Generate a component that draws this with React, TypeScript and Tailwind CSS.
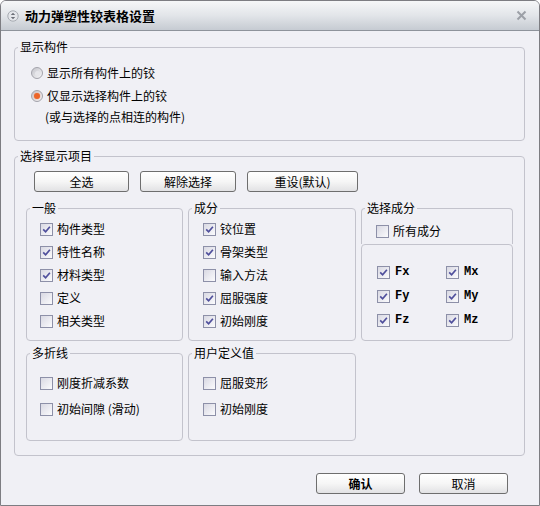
import React from "react";

type CheckProps = { label: string; on?: boolean; mono?: boolean };

const CheckBox = ({ on }: { on?: boolean }) => (
  <span className="flex h-[13px] w-[13px] shrink-0 items-center justify-center border border-[#8d90a8] bg-linear-to-br from-[#d9d9e3] to-[#fbfbfd]">
    {on && (
      <svg width="9" height="9" viewBox="0 0 9 9">
        <path d="M1.2 4.4 L3.6 6.8 L7.9 1.8" stroke="#4f4f9c" strokeWidth="1.7" fill="none" />
      </svg>
    )}
  </span>
);

const CheckRow = ({ label, on, mono }: CheckProps) => (
  <label className="flex h-[16px] items-center gap-[4px] leading-[16px]">
    <CheckBox on={on} />
    {mono ? (
      <span className="pl-[1px] font-['Liberation_Mono',monospace] text-[12px] font-bold">{label}</span>
    ) : (
      <span>{label}</span>
    )}
  </label>
);

const Radio = ({ label, on }: { label: string; on?: boolean }) => (
  <label className="flex h-[16px] items-center gap-[4px] leading-[16px]">
    <span className="flex h-[12px] w-[12px] items-center justify-center rounded-full border border-[#a3a3ab] bg-linear-to-br from-[#c4c4ca] to-[#f7f7f9]">
      {on ? (
        <span className="h-[6px] w-[6px] rounded-full bg-[#ec6428] shadow-[0_0_2px_#f5a07a]" />
      ) : (
        <span className="h-[5px] w-[5px] rounded-full bg-[#e6e6ea]" />
      )}
    </span>
    <span>{label}</span>
  </label>
);

const Button = ({ label, bold, width }: { label: string; bold?: boolean; width: string }) => (
  <button
    className={
      width +
      " h-[21px] rounded-[3px] border border-[#6e6e6e] bg-linear-to-b from-white via-[#f6f6f6] to-[#e2e2e4] text-[12px] leading-[19px] text-black " +
      (bold ? "font-bold" : "")
    }
  >
    {label}
  </button>
);

const Legend = ({ title }: { title: string }) => (
  <legend className="ml-[3px] px-[2px] text-[12px] leading-[16px]">{title}</legend>
);

export default function App() {
  return (
    <div className="flex h-[506px] w-[540px] flex-col overflow-hidden rounded-t-[6px] border border-[#7d7d82] bg-[#f0f0f5] font-['SimSun','Noto_Sans_CJK_SC',sans-serif] text-[12px] text-black">
      {/* title bar */}
      <div className="flex h-[30px] shrink-0 items-center border-b border-[#8e939b] bg-linear-to-b from-[#f6f7f8] via-[#e2e5e9] to-[#c6cbd2] pl-[6px] pr-[12px]">
        <svg width="12" height="12" viewBox="0 0 12 12">
          <circle cx="6" cy="6" r="5.2" fill="#e4e6ea" stroke="#a7abb2" />
          <path d="M3.8 5 L6 2.8 L8.2 5 Z M3.8 7 L6 9.2 L8.2 7 Z" fill="#6c7078" />
        </svg>
        <span className="ml-[6px] text-[13px] font-bold">动力弹塑性铰表格设置</span>
        <svg className="ml-auto" width="11" height="11" viewBox="0 0 11 11">
          <path d="M1.5 1.5 L9.5 9.5 M9.5 1.5 L1.5 9.5" stroke="#9ca0a7" strokeWidth="2" />
        </svg>
      </div>

      {/* body */}
      <div className="flex flex-1 flex-col pl-[13px] pr-[14px]">
        <fieldset className="mt-[8px] rounded-[4px] border border-[#c3c3cc]">
          <Legend title="显示构件" />
          <div className="flex flex-col pb-[15px] pl-[16px] pt-[10px]">
            <Radio label="显示所有构件上的铰" />
            <div className="mt-[7px]">
              <Radio label="仅显示选择构件上的铰" on />
            </div>
            <div className="ml-[14px] mt-[5px] leading-[16px]">(或与选择的点相连的构件)</div>
          </div>
        </fieldset>

        <fieldset className="mt-[7px] rounded-[4px] border border-[#c3c3cc]">
          <Legend title="选择显示项目" />
          <div className="flex flex-col pb-[14px] pl-[11px] pt-[7px]">
            <div className="ml-[8px] flex gap-[11px]">
              <Button label="全选" width="w-[95px]" />
              <Button label="解除选择" width="w-[96px]" />
              <Button label="重设(默认)" width="w-[111px]" />
            </div>

            <div className="mt-[8px] flex gap-[5px]">
              <fieldset className="w-[157px] rounded-[4px] border border-[#c3c3cc]">
                <Legend title="一般" />
                <div className="flex flex-col gap-[7px] pb-[11px] pl-[13px] pt-[5px]">
                  <CheckRow label="构件类型" on />
                  <CheckRow label="特性名称" on />
                  <CheckRow label="材料类型" on />
                  <CheckRow label="定义" />
                  <CheckRow label="相关类型" />
                </div>
              </fieldset>

              <fieldset className="w-[168px] rounded-[4px] border border-[#c3c3cc]">
                <Legend title="成分" />
                <div className="flex flex-col gap-[7px] pb-[11px] pl-[14px] pt-[5px]">
                  <CheckRow label="铰位置" on />
                  <CheckRow label="骨架类型" on />
                  <CheckRow label="输入方法" />
                  <CheckRow label="屈服强度" on />
                  <CheckRow label="初始刚度" on />
                </div>
              </fieldset>

              <div className="flex w-[152px] flex-col">
                <fieldset className="rounded-t-[4px] border border-b-0 border-[#c3c3cc]">
                  <Legend title="选择成分" />
                  <div className="pb-[5px] pl-[14px] pt-[7px]">
                    <CheckRow label="所有成分" />
                  </div>
                </fieldset>
                <div className="flex-1 rounded-[4px] border border-[#c3c3cc] pl-[15px] pt-[19px]">
                  <div className="grid grid-cols-[69px_1fr] gap-y-[8px]">
                    <CheckRow label="Fx" on mono />
                    <CheckRow label="Mx" on mono />
                    <CheckRow label="Fy" on mono />
                    <CheckRow label="My" on mono />
                    <CheckRow label="Fz" on mono />
                    <CheckRow label="Mz" on mono />
                  </div>
                </div>
              </div>
            </div>

            <div className="mt-[4px] flex gap-[5px]">
              <fieldset className="w-[157px] rounded-[4px] border border-[#c3c3cc]">
                <Legend title="多折线" />
                <div className="flex flex-col gap-[10px] pb-[23px] pl-[13px] pt-[14px]">
                  <CheckRow label="刚度折减系数" />
                  <CheckRow label="初始间隙 (滑动)" />
                </div>
              </fieldset>
              <fieldset className="w-[168px] rounded-[4px] border border-[#c3c3cc]">
                <Legend title="用户定义值" />
                <div className="flex flex-col gap-[10px] pb-[23px] pl-[14px] pt-[14px]">
                  <CheckRow label="屈服变形" />
                  <CheckRow label="初始刚度" />
                </div>
              </fieldset>
            </div>
          </div>
        </fieldset>

        <div className="mr-[17px] mt-[17px] flex justify-end gap-[14px]">
          <Button label="确认" bold width="w-[89px]" />
          <Button label="取消" width="w-[89px]" />
        </div>
      </div>
    </div>
  );
}
